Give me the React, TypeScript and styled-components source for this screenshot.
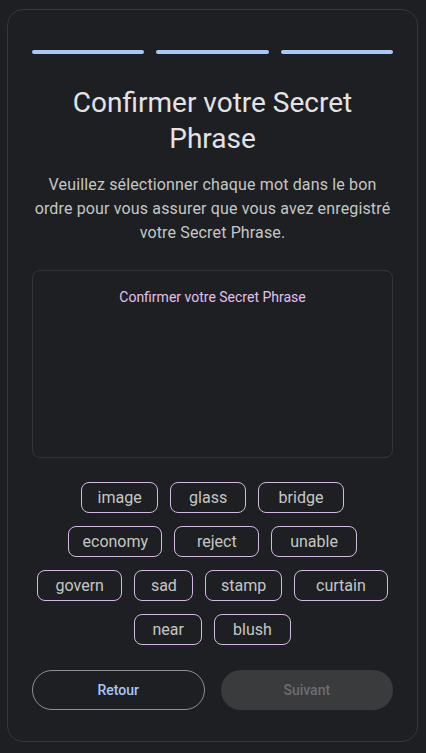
import React from "react";
import styled, { createGlobalStyle } from "styled-components";

const Global = createGlobalStyle`
  html, body { margin: 0; padding: 0; background: #1e1f22; }
  body { font-family: Roboto, "Noto Sans", Arial, sans-serif; }
  * { box-sizing: border-box; }
`;

const Page = styled.div`
  padding: 9px 8px 10px 7px;
  background: #1e1f22;
  min-height: 753px;
`;

const Card = styled.div`
  border: 1px solid #36373a;
  border-radius: 16px;
  padding: 40px 24px 31px;
  display: flex;
  flex-direction: column;
`;

const Steps = styled.div`
  display: grid;
  grid-template-columns: repeat(3, 1fr);
  gap: 12px;
`;

const Step = styled.div<{ $active: boolean }>`
  height: 4px;
  border-radius: 2px;
  background: ${(p) => (p.$active ? "#a8c7fa" : "#444746")};
`;

const Title = styled.h1`
  margin: 31px 0 0;
  font-size: 28px;
  line-height: 36px;
  font-weight: 400;
  color: #e3e3e3;
  text-align: center;
`;

const Description = styled.p`
  margin: 16px 2px 0;
  font-size: 16px;
  line-height: 24px;
  letter-spacing: 0.15px;
  color: #c4c7c5;
  text-align: center;
`;

const Answer = styled.div`
  margin-top: 25px;
  height: 188px;
  border: 1px solid #333438;
  border-radius: 8px;
  padding: 16px 16px;
  display: flex;
  flex-direction: column;
  align-items: center;
`;

const AnswerLabel = styled.span`
  font-size: 14px;
  line-height: 20px;
  color: #e2c0ee;
`;

const Words = styled.div`
  margin-top: 24px;
  display: flex;
  flex-wrap: wrap;
  justify-content: center;
  gap: 13px 12px;
`;

const Chip = styled.button<{ $len: number }>`
  height: 31px;
  width: ${(p) => 33 + 8.7 * p.$len}px;
  padding: 0;
  border: 1px solid #d3b8e2;
  border-radius: 8px;
  background: transparent;
  color: #c4c7c5;
  font-family: Roboto, sans-serif;
  font-size: 16px;
  line-height: 20px;
  cursor: pointer;
`;

const Actions = styled.div`
  margin-top: 25px;
  display: grid;
  grid-template-columns: 1fr 1fr;
  gap: 16px;
`;

const ActionButton = styled.button<{ $variant: "outline" | "disabled" }>`
  height: 40px;
  border-radius: 20px;
  font-family: Roboto, sans-serif;
  font-size: 14px;
  font-weight: 500;
  border: ${(p) => (p.$variant === "outline" ? "1px solid #8e918f" : "none")};
  background: ${(p) => (p.$variant === "outline" ? "transparent" : "#3a3b3d")};
  color: ${(p) => (p.$variant === "outline" ? "#a8c7fa" : "#6c6d70")};
`;

const words = [
  "image", "glass", "bridge",
  "economy", "reject", "unable",
  "govern", "sad", "stamp", "curtain",
  "near", "blush",
];

export default function App() {
  return (
    <>
      <Global />
      <Page>
        <Card>
          <Steps>
            <Step $active />
            <Step $active />
            <Step $active />
          </Steps>
          <Title>Confirmer votre Secret Phrase</Title>
          <Description>
            Veuillez sélectionner chaque mot dans le bon ordre pour vous assurer que vous avez enregistré votre Secret Phrase.
          </Description>
          <Answer>
            <AnswerLabel>Confirmer votre Secret Phrase</AnswerLabel>
          </Answer>
          <Words>
            {words.map((w) => (
              <Chip key={w} $len={w.length}>{w}</Chip>
            ))}
          </Words>
          <Actions>
            <ActionButton $variant="outline">Retour</ActionButton>
            <ActionButton $variant="disabled" disabled>Suivant</ActionButton>
          </Actions>
        </Card>
      </Page>
    </>
  );
}
